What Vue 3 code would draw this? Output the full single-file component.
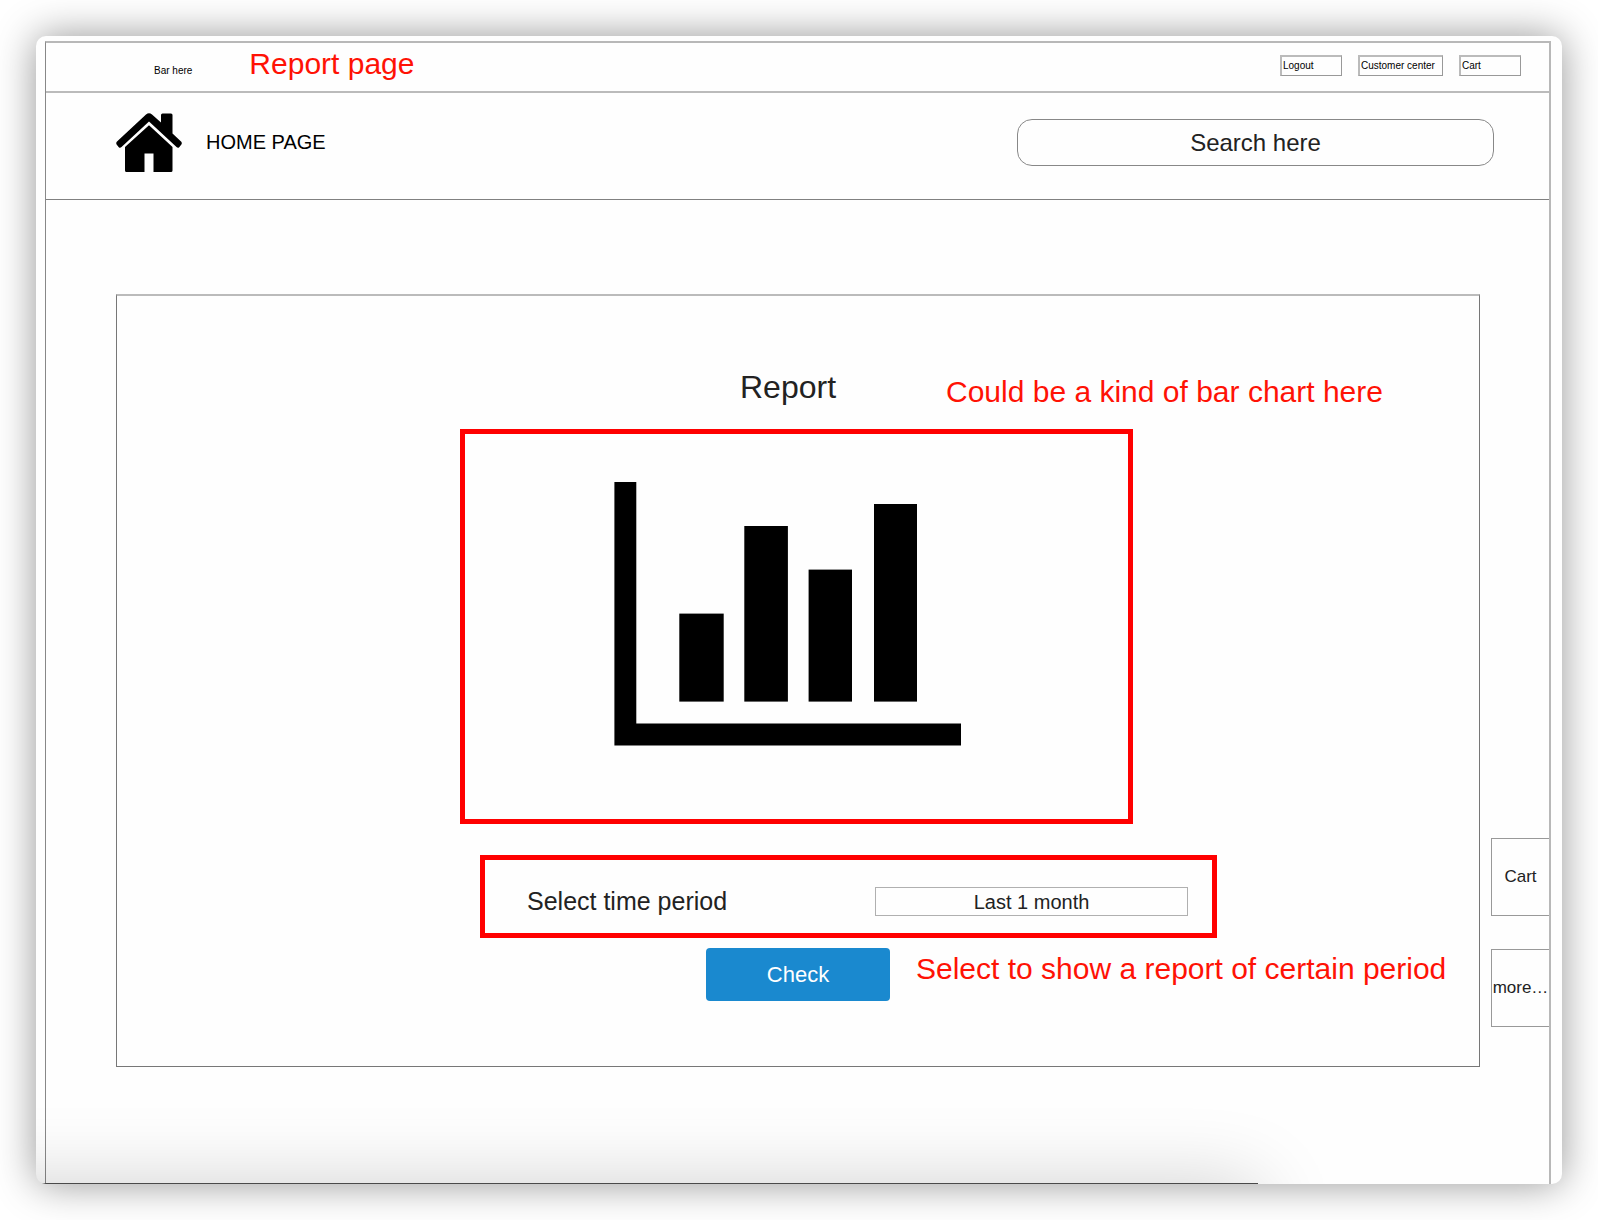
<script setup>
import { ref } from 'vue'

const search = ref('')
const period = ref('Last 1 month')
const periods = ['Last 1 month', 'Last 3 months', 'Last 6 months', 'Last 1 year']
const bars = [
  { x: 65.3, top: 131.6, width: 44.4 },
  { x: 130.3, top: 44, width: 43.6 },
  { x: 194.6, top: 87.6, width: 43.4 },
  { x: 260, top: 22, width: 43 },
]
</script>

<template>
  <div class="page">
    <div class="window">
      <div class="frame">
        <div class="topbar">
          <div class="topbar-left">
            <span class="bar-label">Bar here</span>
            <span class="note">Report page</span>
          </div>
          <nav class="topbar-links">
            <button type="button">Logout</button>
            <button type="button" class="wide">Customer center</button>
            <button type="button">Cart</button>
          </nav>
        </div>

        <header class="header">
          <a class="home" href="#">
            <svg width="66" height="59" viewBox="0 0 66 59" aria-hidden="true">
              <path d="M1 28.600 30 1.400Q33-1 36 1.400L45 9.500V2Q45 .5 46.500 .5H55Q56.500 .5 56.500 2V20.500L65.300 28.800Q66.300 30.200 65.400 31.400L63.200 34.200Q62 35.400 60.500 34.100L33 8.400 5.500 34.100Q4 35.400 2.800 34.200L.6 31.400Q-.3 30 1 28.600Z" />
              <path d="M33 12.300 56.500 34V57.500Q56.500 59 55 59H37.500V40.500H28.500V59H10.500Q9 59 9 57.500V34Z" />
            </svg>
            <span>HOME PAGE</span>
          </a>
          <input v-model="search" class="search" type="text" placeholder="Search here" aria-label="Search" />
        </header>

        <main class="main">
          <section class="panel">
            <div class="title-row">
              <h1>Report</h1>
              <span class="note">Could be a kind of bar chart here</span>
            </div>

            <div class="chart-box">
              <svg width="347" height="264" viewBox="0 0 347 264" role="img" aria-label="Bar chart">
                <path d="M.4 0H22.300V241.400H347V263.600H.4Z" />
                <rect v-for="bar in bars" :key="bar.x" :x="bar.x" :y="bar.top" :width="bar.width" :height="219.6 - bar.top" />
              </svg>
            </div>

            <div class="period-box">
              <label for="period">Select time period</label>
              <select id="period" v-model="period">
                <option v-for="p in periods" :key="p">{{ p }}</option>
              </select>
            </div>

            <div class="action-row">
              <button type="button" class="check">Check</button>
              <span class="note">Select to show a report of certain period</span>
            </div>
          </section>

          <aside class="tabs">
            <button type="button">Cart</button>
            <button type="button">more…</button>
          </aside>
        </main>
      </div>
    </div>
  </div>
</template>

<style>
body {
  margin: 0;
  background: #fff;
}
</style>

<style scoped>
* {
  box-sizing: border-box;
}

.page {
  display: flex;
  min-height: 100vh;
  padding: 36px;
  font-family: "Liberation Sans", Arial, Helvetica, sans-serif;
  color: #000;
}

button,
input,
select {
  margin: 0;
  padding: 0;
  border-radius: 0;
  background: transparent;
  font-family: inherit;
  color: inherit;
}

.window {
  position: relative;
  display: flex;
  flex: 1;
  overflow: hidden;
  padding: 5px 11px 0 9px;
  border-radius: 10px;
  background: #fefefe;
  box-shadow: 0 0 40px rgba(0, 0, 0, 0.42);
}

/* Sheet just below the window edge: a dark top line and the shade it casts */
.window::after {
  content: "";
  position: absolute;
  left: -100px;
  right: 304px;
  top: calc(100% - 1px);
  height: 100px;
  background: #4a4a4a;
  box-shadow: 0 0 78px rgba(0, 0, 0, 0.18);
  pointer-events: none;
}

.frame {
  display: flex;
  flex: 1;
  flex-direction: column;
  min-width: 0;
  border: solid #b8b8b8;
  border-width: 2px 2px 0 1px;
  border-left-color: #888;
}

.topbar {
  display: flex;
  justify-content: space-between;
  align-items: center;
  padding: 4px 28px 8px 108px;
  border-bottom: 2px solid #bbb;
}

.topbar-left {
  display: flex;
  align-items: baseline;
  gap: 57px;
  height: 36px;
}

.bar-label {
  font-size: 10px;
}

.note {
  font-size: 30px;
  line-height: 34px;
  white-space: nowrap;
  color: #ff1205;
}

.topbar-links {
  display: flex;
  gap: 16px;
}

.topbar-links button {
  width: 62px;
  height: 21px;
  padding-left: 1px;
  border: 1px solid #999;
  border-width: 2px 1px 1px 2px;
  border-top-color: #bbb;
  border-left-color: #bbb;
  font-size: 10px;
  text-align: left;
}

.topbar-links .wide {
  width: 85px;
}

.header {
  display: flex;
  justify-content: space-between;
  align-items: center;
  padding: 20px 55px 27px 70px;
  border-bottom: 1px solid #808080;
}

.home {
  display: flex;
  align-items: center;
  gap: 24px;
  font-size: 20px;
  color: inherit;
  text-decoration: none;
}

.home svg {
  display: block;
}

.search {
  width: 477px;
  height: 47px;
  border: 1px solid #888;
  border-radius: 15px;
  font-size: 24px;
  text-align: center;
  color: #222;
}

.search::placeholder {
  color: #222;
  opacity: 1;
}

.main {
  display: flex;
  flex: 1;
  align-items: flex-start;
  gap: 11px;
  padding: 94px 0 116px 70px;
}

.panel {
  display: flex;
  flex: 1;
  flex-direction: column;
  align-items: center;
  padding: 73px 0 65px;
  border: 1px solid #777;
  border-top: 2px solid #bbb;
  color: #222;
}

.title-row,
.action-row {
  display: grid;
  grid-template-columns: 1fr auto 1fr;
  align-items: start;
  width: 100%;
}

.title-row {
  padding-right: 20px;
  margin-bottom: 20px;
}

.title-row > :first-child,
.action-row > :first-child {
  grid-column: 2;
}

h1 {
  margin: 0;
  font-size: 32px;
  font-weight: 400;
  line-height: 36px;
}

.title-row .note {
  width: 0;
  padding: 6px 0 0 110px;
}

.chart-box {
  width: 673px;
  padding: 48px 0 73px 149px;
  margin: 0 3px 31px 0;
  border: 5px solid #f00;
}

.chart-box svg {
  display: block;
}

.period-box {
  display: flex;
  justify-content: space-between;
  align-items: center;
  width: 737px;
  padding: 27px 24px 17px 42px;
  margin: 0 0 10px 101px;
  border: 5px solid #f00;
}

.period-box label {
  font-size: 25px;
  line-height: 29px;
}

.period-box select {
  width: 313px;
  height: 29px;
  border: 1px solid #b0b0b0;
  appearance: none;
  font-size: 20px;
  text-align: center;
  text-align-last: center;
}

.check {
  width: 184px;
  height: 53px;
  border: 0;
  border-radius: 4px;
  background: #1a89cf;
  font-size: 22px;
  color: #fff;
}

.action-row .note {
  width: 0;
  padding: 4px 0 0 26px;
}

.tabs {
  display: flex;
  flex-direction: column;
  gap: 33px;
  width: 58px;
  padding-top: 544px;
}

.tabs button {
  height: 78px;
  border: 1px solid #999;
  border-right: 0;
  font-size: 17px;
  color: #222;
}
</style>
